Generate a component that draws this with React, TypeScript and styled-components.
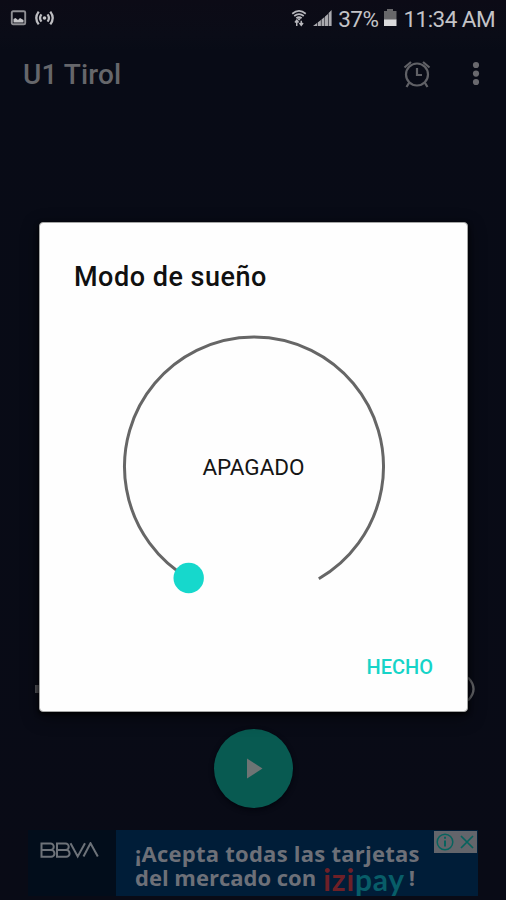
import React from "react";
import styled, { createGlobalStyle } from "styled-components";

const GlobalStyle = createGlobalStyle`
  * { box-sizing: border-box; }
  body { margin: 0; background: #090b16; }
  button { border: 0; padding: 0; background: none; font: inherit; color: inherit; }
`;

const Screen = styled.main`
  position: relative;
  width: 506px;
  height: 900px;
  overflow: hidden;
  display: flex;
  flex-direction: column;
  background: linear-gradient(#0c0b16 0, #0a0c17 36px, #080b16 50px, #090b16 100%);
  font-family: Roboto, "Liberation Sans", sans-serif;
`;

const StatusBar = styled.header`
  display: flex;
  justify-content: space-between;
  height: 36px;
  padding: 0 11px 0 10px;
  color: #c3c3c7;
`;

const StatusGroup = styled.div<{ $gap: number }>`
  display: flex;
  align-items: center;
  gap: ${(p) => p.$gap}px;
`;

const StatusText = styled.span<{ $spacing: number }>`
  font-size: 22.5px;
  line-height: 36px;
  padding-top: 1px;
  letter-spacing: ${(p) => p.$spacing}px;
  white-space: nowrap;
`;

const AppBar = styled.div`
  display: flex;
  align-items: center;
  height: 76px;
  padding: 0 26px 0 23px;
  color: #66676b;
`;

const AppTitle = styled.h1`
  flex: 1;
  margin: 0;
  font-size: 28px;
  font-weight: 500;
  letter-spacing: 0.1px;
`;

const IconButton = styled.button<{ $gap?: number }>`
  display: flex;
  margin-left: ${(p) => p.$gap ?? 0}px;
`;

const VolumeRow = styled.div`
  display: flex;
  align-items: center;
  justify-content: space-between;
  height: 28px;
  margin-top: 563px;
  padding: 0 28px 0 34px;
  color: #65666a;
`;

const PlayButton = styled.button`
  display: flex;
  align-items: center;
  justify-content: center;
  width: 79px;
  height: 79px;
  margin: 26px 0 0 214px;
  border-radius: 50%;
  background: #085a51;
  box-shadow: 0 2px 5px #03050d;
`;

const AdBanner = styled.section`
  display: flex;
  width: 450px;
  height: 66px;
  margin: 22px 0 0 28px;
  background: #001d38;
`;

const AdBrand = styled.div`
  width: 88px;
  padding: 12px 0 0 12px;
  background: #020d1b;
`;

const AdCopy = styled.div`
  flex: 1;
  padding: 11px 0 0 19px;
  color: #6d7078;
  font-family: "Open Sans", sans-serif;
  font-size: 22px;
  font-weight: 700;
  line-height: 24px;
  white-space: nowrap;
`;

const AdLine = styled.div<{ $spacing: number }>`
  display: flex;
  height: 24px;
  letter-spacing: ${(p) => p.$spacing}px;
`;

const PayLogo = styled.span`
  display: flex;
  margin: 2px 4px 0 7px;
  font-family: Lato, sans-serif;
  font-size: 30px;
  font-weight: 700;
`;

const LogoPart = styled.span<{ $color: string; $spacing: number }>`
  color: ${(p) => p.$color};
  letter-spacing: ${(p) => p.$spacing}px;
`;

const AdChoices = styled.div`
  display: flex;
  align-items: center;
  justify-content: space-around;
  width: 43px;
  height: 22px;
  margin-top: 1px;
  margin-right: 1px;
  background: #63656b;
`;

const Dialog = styled.section`
  position: absolute;
  left: 39px;
  top: 222px;
  width: 429px;
  height: 490px;
  display: flex;
  flex-direction: column;
  padding: 38px 34px 30px;
  border: 1px solid #a5a6a5;
  border-radius: 4px;
  background: #fefefe;
  box-shadow: 0 2px 5px #000, 0 5px 18px rgba(0, 0, 0, 0.45);
`;

const DialogTitle = styled.h2`
  margin: 0;
  height: 32px;
  color: #101010;
  font-size: 27px;
  font-weight: 500;
  line-height: 32px;
  letter-spacing: 0.5px;
`;

const Dial = styled.div`
  display: grid;
  place-items: center;
  align-self: center;
  width: 270px;
  height: 270px;
  margin-top: 39px;
  > * { grid-area: 1 / 1; }
`;

const DialValue = styled.span`
  color: #151515;
  font-size: 22.5px;
  line-height: 28px;
`;

const DoneButton = styled.button`
  align-self: flex-end;
  margin-top: auto;
  height: 28px;
  color: #16d4c8;
  font-size: 20px;
  font-weight: 500;
  line-height: 28px;
`;

export default function App() {
  return (
    <Screen>
      <GlobalStyle />
      <StatusBar>
        <StatusGroup $gap={8}>
          <svg width="17" height="16" viewBox="0 0 17 16">
            <rect x="1.8" y="1.3" width="13.4" height="13" rx="1.3" fill="none" stroke="#8f8f94" strokeWidth="1.9" />
            <path d="M3.5 12.5V9l2-1 2.5 2 2-2 3.5 2v2.5z" fill="#c5c5c8" />
          </svg>
          <svg width="19" height="16" viewBox="0 0 20 16" fill="none" stroke="#bdbdc1" strokeWidth="2.4">
            <circle cx="10" cy="8" r="1.9" fill="#c6c6c9" stroke="none" />
            <path d="M6.8 4.2Q3.8 8 6.8 11.8M13.2 4.2q3 3.8 0 7.6M3.9 1.3Q-1.2 8 3.9 14.7M16.1 1.3q5.1 6.7 0 13.4" />
          </svg>
        </StatusGroup>
        <StatusGroup $gap={6}>
          <svg width="16" height="18" viewBox="0 0 17 20" fill="none" stroke="#b9b9be" strokeWidth="1.9">
            <path d="M1 5.3Q8.5-.9 16 5.3M3.2 7.8q5.3-4 10.6 0M5.5 10.1q3-2.2 6 0" />
            <path d="M6 10.2h5L8.5 13z" fill="#b9b9be" stroke="none" />
            <path d="M6 19v-6M4 15L6 12.5l2 2.5M11 13v5M9 15.5l2 2.7 2-2.7" strokeWidth="1.6" />
          </svg>
          <svg width="19" height="18" viewBox="0 0 19 18" fill="#aaaaaf">
            <path d="M0 17l4-3v3zM4.7 13.4l3.2-2.4v6H4.7zM8.5 10.4l3-2.4v9h-3zM12 7.4L15 5v12h-3zM15.6 4L18.6 1v16h-3z" />
          </svg>
          <StatusText $spacing={-0.5}>37%</StatusText>
          <svg width="13" height="18" viewBox="0 0 13 18">
            <path d="M0 2h3V0h6v2h3.5v9H0z" fill="#67676a" />
            <path d="M0 10.5h12.5V17H0z" fill="#dadadc" />
          </svg>
          <StatusText $spacing={-0.55}>11:34 AM</StatusText>
        </StatusGroup>
      </StatusBar>

      <AppBar>
        <AppTitle>U1 Tirol</AppTitle>
        <IconButton aria-label="Alarma">
          <svg width="28" height="28" viewBox="0 0 28 28" fill="none" stroke="#606166" strokeWidth="2.2">
            <circle cx="14" cy="14.5" r="11" />
            <path d="M14 8v7h5M1.5 7.5L8 2M26.5 7.5L20 2M6.2 22.7L3.5 27M21.8 22.7l2.7 4.3" />
          </svg>
        </IconButton>
        <IconButton $gap={41} aria-label="Más opciones">
          <svg width="8" height="26" viewBox="0 0 8 26" fill="#69696e">
            <circle cx="4" cy="4" r="3.1" />
            <circle cx="4" cy="12.6" r="3.1" />
            <circle cx="4" cy="21" r="3.1" />
          </svg>
        </IconButton>
      </AppBar>

      <VolumeRow>
        <svg width="16" height="20" viewBox="0 0 16 20" fill="#55565b">
          <path d="M1 6h5l7-6v20l-7-6H1z" />
        </svg>
        <svg width="18" height="26" viewBox="0 0 18 26" fill="none" stroke="currentColor" strokeWidth="2.3">
          <path d="M8 1.5Q19 13 8 24.5M4 7q5 6 0 12" />
        </svg>
      </VolumeRow>

      <PlayButton aria-label="Reproducir">
        <svg width="20" height="22" viewBox="0 0 20 22" fill="#6e7474">
          <path d="M3 0.5v20L18.5 10.5z" />
        </svg>
      </PlayButton>

      <AdBanner>
        <AdBrand>
          <svg width="60" height="17" viewBox="0 0 60 17" fill="none" stroke="#6d7279" strokeWidth="2">
            <path d="M1.5 1.5h9a3.2 3.2 0 010 6.5h-9zM1.5 8h9.6a3.4 3.4 0 010 6.8H1.5zM17 1.5h8.5a3.2 3.2 0 010 6.5H17zM17 8h9.2a3.4 3.4 0 010 6.8H17zM30.5 1.2l7.2 13.3L45 1.2M43.5 14.5l7-13.3 7.3 13.3" />
          </svg>
        </AdBrand>
        <AdCopy>
          <AdLine $spacing={0.25}>¡Acepta todas las tarjetas</AdLine>
          <AdLine $spacing={0}>
            del mercado con
            <PayLogo>
              <LogoPart $color="#6e2027" $spacing={0.9}>izi</LogoPart>
              <LogoPart $color="#085d68" $spacing={0.7}>pay</LogoPart>
            </PayLogo>
            !
          </AdLine>
        </AdCopy>
        <AdChoices>
          <svg width="18" height="18" viewBox="0 0 18 18" fill="none" stroke="#07635e" strokeWidth="1.5">
            <circle cx="9" cy="9" r="7.8" />
            <path d="M9 7.5v6M9 3.8v2" strokeWidth="2" />
          </svg>
          <svg width="16" height="16" viewBox="0 0 16 16" stroke="#07635e" strokeWidth="1.7">
            <path d="M2 2l12 12M14 2L2 14" />
          </svg>
        </AdChoices>
      </AdBanner>

      <Dialog role="dialog">
        <DialogTitle>Modo de sueño</DialogTitle>
        <Dial>
          <svg width="270" height="270" viewBox="0 0 270 270">
            <path d="M70.2 246.7A129.5 129.5 0 1 1 199.8 246.7" fill="none" stroke="#666" strokeWidth="3" />
            <circle cx="69.7" cy="246" r="15.2" fill="#16d8cc" />
          </svg>
          <DialValue>APAGADO</DialValue>
        </Dial>
        <DoneButton>HECHO</DoneButton>
      </Dialog>
    </Screen>
  );
}
